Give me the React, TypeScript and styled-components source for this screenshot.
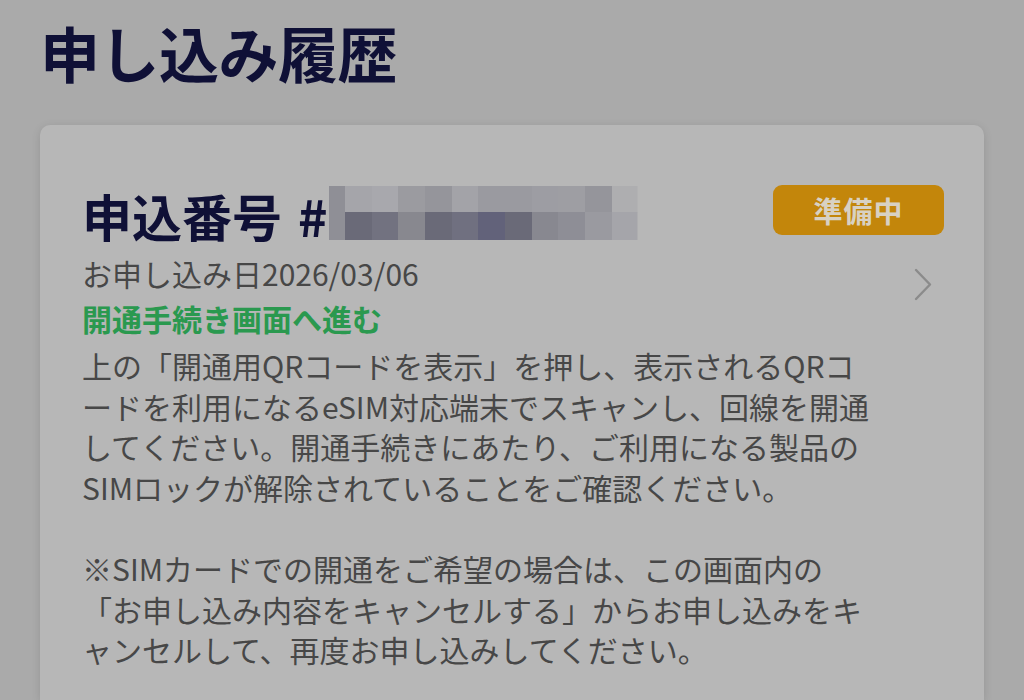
import React from "react";
import styled, { createGlobalStyle } from "styled-components";

const GlobalStyle = createGlobalStyle`
  html, body {
    margin: 0;
    padding: 0;
    background: #aaaaaa;
  }
  body {
    font-family: "Noto Sans CJK JP", "Noto Sans", sans-serif;
  }
`;

const Page = styled.div`
  height: 100vh;
  box-sizing: border-box;
  background: #aaaaaa;
  padding: 10px 40px 0 40px;
  overflow: hidden;
  display: flex;
  flex-direction: column;
`;

const Title = styled.h1`
  margin: 0 0 31px 0;
  font-size: 60px;
  line-height: 84px;
  font-weight: 700;
  color: #0f1036;
  letter-spacing: -0.5px;
`;

const Card = styled.section`
  flex: 1;
  min-height: 0;
  background: #b7b7b7;
  border-radius: 10px 10px 0 0;
  box-shadow: 0 2px 10px rgba(0, 0, 0, 0.12);
  padding: 58px 40px 0 42px;
  box-sizing: border-box;
  overflow: hidden;
`;

const HeaderRow = styled.div`
  display: flex;
  justify-content: space-between;
  align-items: flex-start;
`;

const Heading = styled.h2`
  margin: 0;
  font-size: 50px;
  line-height: 64px;
  font-weight: 700;
  color: #0f1036;
  display: flex;
  align-items: center;
  white-space: nowrap;
`;

const Hash = styled.span`
  margin-left: 16px;
`;

const MosaicSvg = styled.svg`
  display: block;
  margin-left: 1px;
  margin-top: -4px;
`;

const Badge = styled.span`
  display: inline-flex;
  align-items: center;
  justify-content: center;
  width: 171px;
  height: 50px;
  margin-top: 2px;
  border-radius: 9px;
  background: #c3860b;
  color: #d8d1c3;
  font-size: 29px;
  font-weight: 700;
  letter-spacing: 1px;
`;

const Body = styled.div`
  display: grid;
  grid-template-columns: 793px 1fr;
  margin-top: 6px;
`;

const TextColumn = styled.div`
  display: flex;
  flex-direction: column;
`;

const DateLine = styled.p`
  margin: 0;
  font-size: 30px;
  line-height: 41px;
  color: #474747;
`;

const ActionLink = styled.a`
  margin-top: 4px;
  font-size: 30px;
  line-height: 41px;
  font-weight: 700;
  color: #2a994f;
  text-decoration: none;
`;

const Description = styled.p`
  margin: 6px 0 0 0;
  font-size: 30px;
  line-height: 40.6px;
  color: #474747;
  line-break: normal;
  word-break: normal;
`;

const ChevronWrap = styled.div`
  justify-self: end;
  margin-right: 10px;
  margin-top: 15px;
`;

const mosaicCols = [16, 27, 26, 27, 27, 26, 27, 27, 26, 27, 27, 25];
const row1 = [
  "#8f8f96", "#a5a5aa", "#a8a8ad", "#9b9ba0", "#95959b", "#a3a3a8",
  "#9a9aa0", "#9a9aa0", "#9d9da3", "#9e9ea3", "#95959b", "#aeaeb0",
];
const row2 = [
  "#8f8f96", "#6a6a78", "#727280", "#88888f", "#6a6a78", "#707080",
  "#62627a", "#6a6a78", "#888890", "#8e8e96", "#9a9aa0", "#a5a5aa",
];

const Mosaic: React.FC = () => {
  let x = 0;
  const rects: React.ReactNode[] = [];
  mosaicCols.forEach((w, i) => {
    rects.push(<rect key={`a${i}`} x={x} y={0} width={w + 0.5} height={26.5} fill={row1[i]} />);
    rects.push(<rect key={`b${i}`} x={x} y={26} width={w + 0.5} height={28} fill={row2[i]} />);
    x += w;
  });
  return (
    <MosaicSvg width={309} height={54} viewBox="0 0 309 54" aria-hidden>
      {rects}
    </MosaicSvg>
  );
};

const Chevron: React.FC = () => (
  <svg width="20" height="34" viewBox="0 0 20 34" aria-hidden>
    <path d="M2 2 L16 16.5 L2 31" fill="none" stroke="#8b8b8b" strokeWidth="2.4" strokeLinecap="round" strokeLinejoin="round" />
  </svg>
);

export default function App() {
  return (
    <Page lang="ja">
      <GlobalStyle />
      <Title>申し込み履歴</Title>
      <Card>
        <HeaderRow>
          <Heading>
            申込番号<Hash>#</Hash>
            <Mosaic />
          </Heading>
          <Badge>準備中</Badge>
        </HeaderRow>
        <Body>
          <TextColumn>
            <DateLine>お申し込み日2026/03/06</DateLine>
            <ActionLink href="#">開通手続き画面へ進む</ActionLink>
            <Description>
              上の「開通用QRコードを表示」を押し、表示されるQRコードを利用になるeSIM対応端末でスキャンし、回線を開通してください。開通手続きにあたり、ご利用になる製品のSIMロックが解除されていることをご確認ください。
              <br />
              <br />
              ※SIMカードでの開通をご希望の場合は、この画面内の「お申し込み内容をキャンセルする」からお申し込みをキャンセルして、再度お申し込みしてください。
            </Description>
          </TextColumn>
          <ChevronWrap>
            <Chevron />
          </ChevronWrap>
        </Body>
      </Card>
    </Page>
  );
}
